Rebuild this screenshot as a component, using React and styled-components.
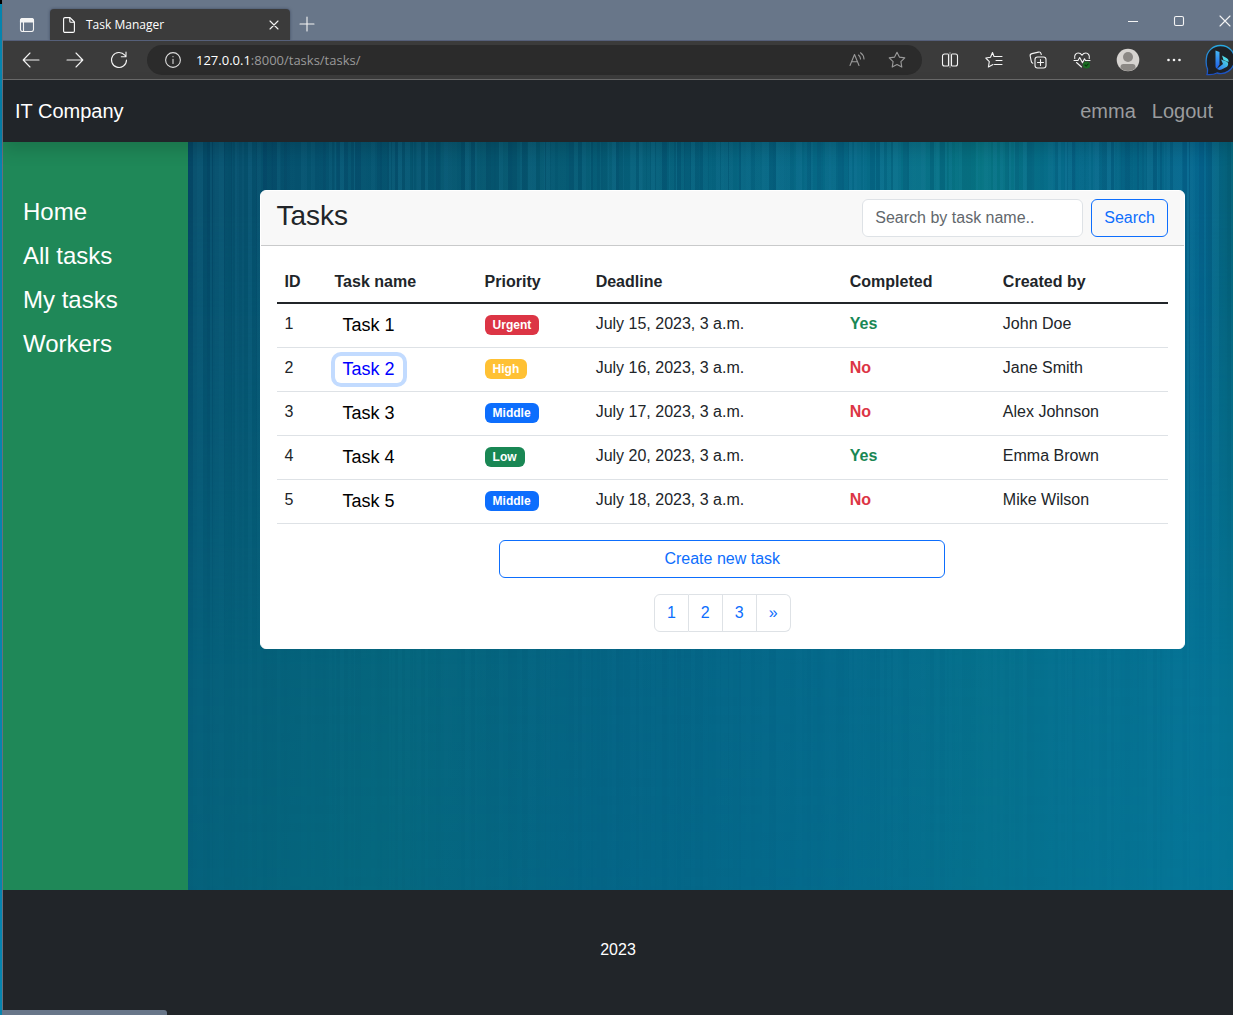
import React from 'react';
import styled, { createGlobalStyle, css } from 'styled-components';

const sans = '"Liberation Sans", Arial, sans-serif';
const chromeFont = '"Open Sans", "Noto Sans", sans-serif';

const ink = '#212529';
const blue = '#0d6efd';
const green = '#198754';
const red = '#dc3545';
const yellow = '#ffc134';
const line = '#dee2e6';

/* Fine vertical grain for the backdrop: light and dark streaks of varying width. */
const streaks = (() => {
  let seed = 17;
  const next = () => {
    seed = (seed * 16807) % 2147483647;
    return seed / 2147483647;
  };
  const stops = [];
  let at = 0;
  while (at < 1000) {
    const end = at + 1 + Math.floor(next() * 4);
    const colour =
      next() > 0.45
        ? `rgba(60, 150, 190, ${(next() * 0.14).toFixed(2)})`
        : `rgba(0, 20, 70, ${(next() * 0.12).toFixed(2)})`;
    stops.push(`${colour} ${at / 10}%`, `${colour} ${end / 10}%`);
    at = end;
  }
  return `linear-gradient(90deg, ${stops.join(', ')})`;
})();

const GlobalStyle = createGlobalStyle`
  *, *::before, *::after { box-sizing: border-box; }
  body {
    margin: 0;
    background: linear-gradient(#000 4px, #0584ae 4px);
    color: ${ink};
    font: 400 16px/24px ${sans};
  }
  button, input { font: inherit; }
  a { color: inherit; text-decoration: none; }
`;

const Window = styled.div`
  position: relative;
  display: flex;
  flex-direction: column;
  min-height: 100vh;
  margin-left: 2px;
  border-left: 1px solid #6b6f7c;
`;

/* Browser frame */

const TitleBar = styled.div`
  display: flex;
  align-items: flex-end;
  height: 41px;
  overflow: hidden;
  background: #687689;
  border-bottom: 1px solid #56607a;
`;

const ChromeButton = styled.button`
  display: flex;
  flex: none;
  align-items: center;
  justify-content: center;
  width: ${(p) => p.$width || 44}px;
  height: ${(p) => p.$height || 32}px;
  padding: 0;
  border: 0;
  background: none;
  color: ${(p) => (p.$muted ? '#9a9a9a' : '#f4f4f4')};
`;

const BingButton = styled(ChromeButton)`
  justify-content: flex-start;
  width: 37px;
  padding-left: 9px;
  overflow: hidden;

  svg {
    flex: none;
  }
`;

const Tab = styled.div`
  display: flex;
  align-items: center;
  width: 240px;
  height: 32px;
  margin-bottom: -1px;
  padding-left: 13px;
  border-radius: 4px 4px 0 0;
  background: #3b3b3b;
  box-shadow: 0 0 3px rgba(20, 30, 60, 0.5);
  color: #fff;
  font: 400 12px/16px ${chromeFont};
`;

const TabTitle = styled.span`
  flex: 1;
  padding-left: 11px;
  white-space: nowrap;
`;

const WindowControls = styled.div`
  display: flex;
  align-self: flex-start;
  margin: 0 -15px 0 auto;
`;

const Toolbar = styled.div`
  display: flex;
  align-items: center;
  height: 39px;
  padding-left: 6px;
  overflow: hidden;
  border-bottom: 1px solid #6b6b6b;
  background: #3b3b3b;
`;

const AddressBar = styled.div`
  display: flex;
  flex: 1;
  align-items: center;
  height: 30px;
  margin: 0 6px;
  padding: 0 5px 0 18px;
  border-radius: 15px;
  background: #2b2b2b;
`;

const Url = styled.div`
  flex: 1;
  padding-left: 15px;
  color: #9a9a9a;
  font: 400 13px/20px ${chromeFont};
  white-space: nowrap;

  b {
    color: #fff;
    font-weight: 400;
  }
`;

const StatusBubble = styled.div`
  position: absolute;
  bottom: 0;
  left: -1px;
  width: 165px;
  height: 5px;
  border-radius: 0 3px 0 0;
  background: #687689;
`;

/* Site */

const Navbar = styled.header`
  position: relative;
  z-index: 1;
  display: flex;
  align-items: center;
  justify-content: space-between;
  height: 62px;
  padding: 0 20px 0 12px;
  background: ${ink};
  box-shadow: 0 8px 16px rgba(0, 0, 0, 0.15);
  font-size: 20px;
  line-height: 30px;
`;

const Brand = styled.a`
  color: #fff;
`;

const UserLinks = styled.nav`
  display: flex;
  gap: 16px;
  color: #9a9c9e;
`;

const Body = styled.div`
  display: flex;
  flex: 1;
`;

const Sidebar = styled.nav`
  flex: none;
  width: 15%;
  padding: 48px 20px;
  background: #1f8858;
`;

const SideLink = styled.a`
  display: block;
  color: #fff;
  font-size: 24px;
  line-height: 44px;
`;

const Main = styled.main`
  position: relative;
  flex: 1;
  min-width: 0;
  padding: 48px 48px 48px 72px;
  background: linear-gradient(
    97deg,
    #05607c 0%,
    #056a80 24%,
    #046688 44%,
    #046a8c 62%,
    #05718f 78%,
    #05789a 100%
  );

  &::before {
    content: '';
    position: absolute;
    inset: 0;
    background:
      ${streaks},
      linear-gradient(
        90deg,
        #054c68 0%,
        #055470 14%,
        #05566e 30%,
        #05607a 46%,
        #066a88 64%,
        #067482 76%,
        #066a8a 84%,
        #056484 92%,
        #056890 97%,
        #056478 100%
      );
    mask-image: linear-gradient(#000 8%, rgba(0, 0, 0, 0.65) 35%, rgba(0, 0, 0, 0.2) 70%, rgba(0, 0, 0, 0.1));
  }
`;

const Card = styled.section`
  position: relative;
  overflow: hidden;
  border: 1px solid #fff;
  border-radius: 6px;
  background: #fff;
`;

const CardHeader = styled.div`
  display: flex;
  align-items: flex-start;
  justify-content: space-between;
  padding: 8px 16px;
  border-bottom: 1px solid #c9cacb;
  background: #f8f8f8;
`;

const Title = styled.h1`
  margin: 0;
  font-size: 28px;
  font-weight: 400;
  line-height: 34px;
`;

const SearchForm = styled.form`
  display: flex;
  gap: 8px;
`;

const SearchInput = styled.input`
  width: 221px;
  height: 38px;
  padding: 0 12px;
  border: 1px solid ${line};
  border-radius: 6px;
  background: #fff;
  color: ${ink};

  &::placeholder {
    color: #62676c;
    opacity: 1;
  }
`;

const outline = css`
  height: 38px;
  padding: 0 12px;
  border: 1px solid ${blue};
  border-radius: 6px;
  background: transparent;
  color: ${blue};
  line-height: 36px;
  text-align: center;
`;

const SearchButton = styled.button`
  ${outline}
`;

const CreateLink = styled.a`
  ${outline}
  display: block;
  width: 50%;
  margin: 16px auto;
`;

const CardBody = styled.div`
  padding: 16px;
`;

const Table = styled.table`
  width: 100%;
  border-collapse: separate;
  border-spacing: 0;
  table-layout: fixed;
  text-align: left;
`;

const HeadCell = styled.th`
  padding: 8px;
  border-bottom: 2px solid ${ink};
`;

const Cell = styled.td`
  height: 44px;
  padding: 8px;
  border-bottom: 1px solid ${line};
  color: ${(p) => p.$color || ink};
  font-weight: ${(p) => (p.$color ? 700 : 400)};
  line-height: 24px;
  vertical-align: top;
`;

const TaskLink = styled.a`
  display: inline-block;
  padding: 0 8px;
  border-radius: 6px;
  color: ${(p) => (p.$focused ? '#0000ff' : '#000')};
  font-size: 18px;
  line-height: 27px;
  box-shadow: ${(p) => (p.$focused ? '0 0 0 4px #c2dbff' : 'none')};
`;

const Badge = styled.span`
  display: inline-block;
  margin-top: 3px;
  padding: 0 8px;
  border-radius: 6px;
  background: ${(p) => p.$color};
  color: #fff;
  font-size: 12px;
  font-weight: 700;
  line-height: 20px;
  vertical-align: top;
`;

const Pagination = styled.nav`
  display: flex;
  justify-content: center;
`;

const PageLink = styled.a`
  padding: 0 12px;
  border: 1px solid ${line};
  color: ${blue};
  line-height: 36px;

  & + & {
    border-left: 0;
  }
  &:first-child {
    border-radius: 6px 0 0 6px;
  }
  &:last-child {
    border-radius: 0 6px 6px 0;
  }
`;

const Footer = styled.footer`
  min-height: 125px;
  padding: 48px 0;
  background: ${ink};
  color: #fff;
  text-align: center;
`;

/* Line icons share one stroke style. */
const Icon = ({ size = 16, children }) => (
  <svg
    width={size}
    height={size}
    viewBox={`0 0 ${size} ${size}`}
    fill="none"
    stroke="currentColor"
    strokeWidth="1.1"
    strokeLinecap="round"
    strokeLinejoin="round"
    aria-hidden="true"
  >
    {children}
  </svg>
);

const WorkspaceIcon = () => (
  <Icon>
    <rect x="1.5" y="2.5" width="13" height="13" rx="2" />
    <path d="M1.500 6V4.500a2 2 0 0 1 2-2h9a2 2 0 0 1 2 2V6z" fill="currentColor" />
    <path d="M4.5 6v9.500" />
  </Icon>
);

const PageIcon = () => (
  <svg width="12" height="16" viewBox="0 0 12 16" fill="none" stroke="#fff" strokeWidth="1.1" strokeLinejoin="round" aria-hidden="true">
    <path d="M2 .6h5l4.400 4.400v9a1.400 1.400 0 0 1-1.400 1.400H2A1.400 1.400 0 0 1 .6 14V2A1.400 1.400 0 0 1 2 .6z" />
    <path d="M6.800.8v3.400a1 1 0 0 0 1 1h3.400" />
  </svg>
);

const CrossIcon = ({ size }) => (
  <Icon size={size}>
    <path d={`M1 1L${size - 1} ${size - 1}M${size - 1} 1L1 ${size - 1}`} />
  </Icon>
);

const ReadAloudIcon = () => (
  <Icon>
    <path d="M1 13.500L5.500 2.500 10 13.500M2.600 9.800h5.800" />
    <path d="M9.500 3c1.200 1 1.900 2.300 2 4M11.500.8c2.200 1.400 3.300 3.400 3.500 6.200" />
  </Icon>
);

const StarIcon = () => (
  <Icon size={18}>
    <path d="M9 1.200l2.400 4.900 5.400.8-3.900 3.800.9 5.400L9 13.600l-4.800 2.500.9-5.400L1.200 6.900l5.400-.8z" />
  </Icon>
);

const SplitIcon = () => (
  <Icon size={18}>
    <path d="M7 3H3.500a2 2 0 0 0-2 2v8a2 2 0 0 0 2 2H7M11 3h3.500a2 2 0 0 1 2 2v8a2 2 0 0 1-2 2H11M7.500 3.500v11M10.500 3.500v11" />
    <path d="M9 1.500v15" stroke="#8c8c8c" />
  </Icon>
);

const FavoritesIcon = () => (
  <Icon size={18}>
    <path d="M9 5.500L7.500 1.500 5.500 6.300.8 7l3.500 3.600-.9 5.400 4.600-2.400M9 5.500h8M11 9.500h6M9.500 13.500h7.500" />
  </Icon>
);

const CollectionsIcon = () => (
  <Icon size={18}>
    <rect x="6" y="6" width="11" height="11" rx="2.5" />
    <path d="M11.500 8.500v6M8.500 11.500h6" />
    <path d="M3.800 12.200A2.500 2.500 0 0 1 2.200 10L1.200 5.200a2.200 2.200 0 0 1 1.700-2.600L9.500 1.100a2.200 2.200 0 0 1 2.600 1.700l.2.700" />
  </Icon>
);

const HealthIcon = () => (
  <Icon size={18}>
    <path d="M1.800 7.500C1 4.400 2.800 2 5.200 2 7.200 2 8.200 3 9 4.200 9.800 3 10.800 2 12.800 2c2.400 0 4.200 2.400 3.400 5.500" />
    <path d="M1 9.500h4l1.700-3 2.800 5.200 2-4 1 1.800H17M3.500 11.500L8.500 16" />
    <circle cx="13.500" cy="14" r="3.600" fill="#1a6b22" stroke="none" />
    <path d="M12 14l1.200 1.200 2-2.200" stroke="#0b3310" />
  </Icon>
);

const Avatar = () => (
  <svg width="24" height="24" viewBox="0 0 24 24" aria-hidden="true">
    <clipPath id="face"><circle cx="12" cy="12" r="11" /></clipPath>
    <circle cx="12" cy="12" r="11.3" fill="#d6d3d0" />
    <circle cx="12" cy="9" r="5" fill="#8b8885" />
    <path d="M4.500 24v-5a3 3 0 0 1 3-3h9a3 3 0 0 1 3 3v5z" fill="#8b8885" clipPath="url(#face)" />
  </svg>
);

const BingIcon = () => (
  <svg width="32" height="32" viewBox="0 0 32 32" aria-hidden="true">
    <defs>
      <linearGradient id="ring" x1="0" y1="0" x2="0" y2="1">
        <stop offset="0" stopColor="#29a9e0" />
        <stop offset="1" stopColor="#1c4fc4" />
      </linearGradient>
      <linearGradient id="stem" x1="0" y1="0" x2="0" y2="1">
        <stop offset="0" stopColor="#45b8f5" />
        <stop offset="1" stopColor="#1f5fe8" />
      </linearGradient>
      <linearGradient id="bowl" x1="0" y1="1" x2="1" y2="0">
        <stop offset="0" stopColor="#2a6ff0" />
        <stop offset="1" stopColor="#4fe0e0" />
      </linearGradient>
    </defs>
    <path
      d="M15.500 1.500a14 14 0 1 1-3.500 27.500C9 30.500 5.500 31 2 30.500c.6-1.600.6-3.500.5-5.500C.8 21.500 1 18 1.300 15A14 14 0 0 1 15.500 1.500z"
      fill="#1d2126"
      stroke="url(#ring)"
      strokeWidth="1.3"
    />
    <path d="M10.500 6.500l4 1.500v12.500L12 24.500c-1 0-1.500-1-1.500-2.500z" fill="url(#stem)" />
    <path d="M12 24.800l6-4.800-2-4.500 5.500 2c2 .8 2.300 3.600.5 5.200l-5.500 2.800c-1.800.9-3.500.4-4.500-.7z" fill="url(#bowl)" />
    <path d="M17 11.500l4.500 2.500c1.500.8 2.300 2.200 2.100 4L18.500 16z" fill="#4fd8e8" />
  </svg>
);

const priorityColor = { Urgent: red, High: yellow, Middle: blue, Low: green };

const columns = [
  ['ID', 50],
  ['Task name', 150],
  ['Priority', 111],
  ['Deadline', 254],
  ['Completed', 153],
  ['Created by', 173],
];

const tasks = [
  { id: 1, priority: 'Urgent', day: 15, done: true, author: 'John Doe' },
  { id: 2, priority: 'High', day: 16, done: false, author: 'Jane Smith', focused: true },
  { id: 3, priority: 'Middle', day: 17, done: false, author: 'Alex Johnson' },
  { id: 4, priority: 'Low', day: 20, done: true, author: 'Emma Brown' },
  { id: 5, priority: 'Middle', day: 18, done: false, author: 'Mike Wilson' },
];

const BrowserFrame = () => (
  <>
    <TitleBar>
      <ChromeButton $width={47} aria-label="Tab actions"><WorkspaceIcon /></ChromeButton>
      <Tab>
        <PageIcon />
        <TabTitle>Task Manager</TabTitle>
        <ChromeButton $width={32} aria-label="Close tab"><CrossIcon size={10} /></ChromeButton>
      </Tab>
      <ChromeButton $width={34} aria-label="New tab">
        <Icon><path d="M8 1v14M1 8h14" /></Icon>
      </ChromeButton>
      <WindowControls>
        <ChromeButton $width={46} $height={41} aria-label="Minimize">
          <Icon size={10}><path d="M0 5.500h10" /></Icon>
        </ChromeButton>
        <ChromeButton $width={46} $height={41} aria-label="Maximize">
          <Icon size={12}><rect x="1.5" y="1.5" width="9" height="9" rx="1.5" /></Icon>
        </ChromeButton>
        <ChromeButton $width={46} $height={41} aria-label="Close"><CrossIcon size={12} /></ChromeButton>
      </WindowControls>
    </TitleBar>
    <Toolbar>
      <ChromeButton aria-label="Back">
        <Icon size={18}><path d="M17 9H1.500M8 2L1.200 9 8 16" /></Icon>
      </ChromeButton>
      <ChromeButton aria-label="Forward">
        <Icon size={18}><path d="M1 9h15.500M10 2l6.800 7L10 16" /></Icon>
      </ChromeButton>
      <ChromeButton aria-label="Reload">
        <Icon size={18}><path d="M16.500 9A7.500 7.500 0 1 1 14.800 4.200L16 5.500M16 1v4.700h-4.700" /></Icon>
      </ChromeButton>
      <AddressBar>
        <Icon>
          <circle cx="8" cy="8" r="7.4" stroke="#ddd" />
          <path d="M8 7.200V11.500M8 4.600v.2" stroke="#ddd" />
        </Icon>
        <Url><b>127.0.0.1</b>:8000/tasks/tasks/</Url>
        <ChromeButton $width={40} $height={30} $muted aria-label="Read aloud"><ReadAloudIcon /></ChromeButton>
        <ChromeButton $width={40} $height={30} $muted aria-label="Add to favorites"><StarIcon /></ChromeButton>
      </AddressBar>
      <ChromeButton aria-label="Split screen"><SplitIcon /></ChromeButton>
      <ChromeButton aria-label="Favorites"><FavoritesIcon /></ChromeButton>
      <ChromeButton aria-label="Collections"><CollectionsIcon /></ChromeButton>
      <ChromeButton aria-label="Browser essentials"><HealthIcon /></ChromeButton>
      <ChromeButton $width={48} aria-label="Profile"><Avatar /></ChromeButton>
      <ChromeButton aria-label="More">
        <Icon>
          <g fill="currentColor" stroke="none">
            <circle cx="2.5" cy="8" r="1.3" />
            <circle cx="8" cy="8" r="1.3" />
            <circle cx="13.5" cy="8" r="1.3" />
          </g>
        </Icon>
      </ChromeButton>
      <BingButton aria-label="Bing chat"><BingIcon /></BingButton>
    </Toolbar>
  </>
);

const TaskTable = () => (
  <Table>
    <colgroup>
      {columns.map(([name, width]) => <col key={name} width={width} />)}
    </colgroup>
    <thead>
      <tr>{columns.map(([name]) => <HeadCell key={name} scope="col">{name}</HeadCell>)}</tr>
    </thead>
    <tbody>
      {tasks.map((t) => (
        <tr key={t.id}>
          <Cell>{t.id}</Cell>
          <Cell><TaskLink href="#" $focused={t.focused}>Task {t.id}</TaskLink></Cell>
          <Cell><Badge $color={priorityColor[t.priority]}>{t.priority}</Badge></Cell>
          <Cell>July {t.day}, 2023, 3 a.m.</Cell>
          <Cell $color={t.done ? green : red}>{t.done ? 'Yes' : 'No'}</Cell>
          <Cell>{t.author}</Cell>
        </tr>
      ))}
    </tbody>
  </Table>
);

export default function App() {
  return (
    <>
      <GlobalStyle />
      <Window>
        <BrowserFrame />
        <Navbar>
          <Brand href="#">IT Company</Brand>
          <UserLinks aria-label="Account">
            <a href="#">emma</a>
            <a href="#">Logout</a>
          </UserLinks>
        </Navbar>
        <Body>
          <Sidebar aria-label="Main">
            {['Home', 'All tasks', 'My tasks', 'Workers'].map((name) => (
              <SideLink key={name} href="#">{name}</SideLink>
            ))}
          </Sidebar>
          <Main>
            <Card>
              <CardHeader>
                <Title>Tasks</Title>
                <SearchForm role="search">
                  <SearchInput type="text" placeholder="Search by task name.." aria-label="Search by task name" />
                  <SearchButton type="submit">Search</SearchButton>
                </SearchForm>
              </CardHeader>
              <CardBody>
                <TaskTable />
                <CreateLink href="#">Create new task</CreateLink>
                <Pagination aria-label="Pages">
                  {['1', '2', '3', '»'].map((p) => <PageLink key={p} href="#">{p}</PageLink>)}
                </Pagination>
              </CardBody>
            </Card>
          </Main>
        </Body>
        <Footer>2023</Footer>
        <StatusBubble />
      </Window>
    </>
  );
}
